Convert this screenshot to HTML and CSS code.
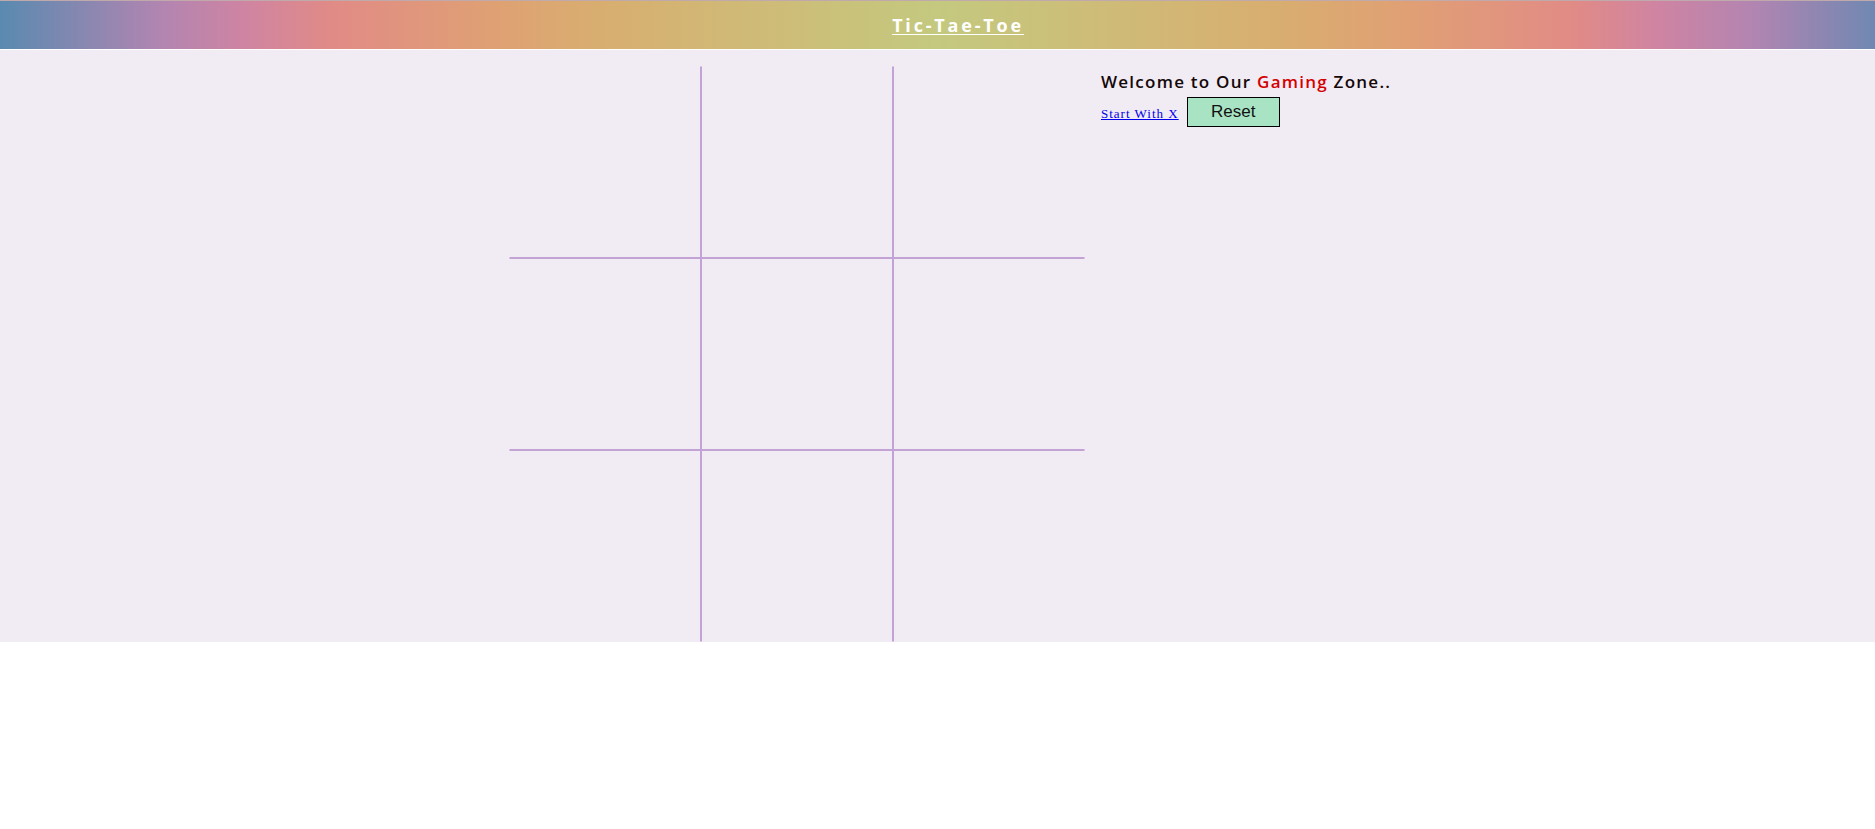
FILE: index.html
```html
<!DOCTYPE html>
<html lang="en">
<head>
<meta charset="utf-8">
<title>Tic-Tae-Toe</title>
<link rel="stylesheet" href="styles.css">
</head>
<body>
<header class="topbar">
  <a class="title" href="#">Tic-Tae-Toe</a>
</header>
<main class="main">
  <div class="board">
    <div class="cell"></div>
    <div class="cell"></div>
    <div class="cell"></div>
    <div class="cell"></div>
    <div class="cell"></div>
    <div class="cell"></div>
    <div class="cell"></div>
    <div class="cell"></div>
    <div class="cell"></div>
  </div>
  <section class="panel">
    <h2 class="welcome">Welcome to Our <span class="accent">Gaming</span> Zone..</h2>
    <div class="controls">
      <a class="start" href="#">Start With X</a>
      <button class="reset" type="button">Reset</button>
    </div>
  </section>
</main>
</body>
</html>
```

FILE: styles.css
```css
html, body {
  margin: 0;
  padding: 0;
  background: #ffffff;
}

.topbar {
  height: 48px;
  border-top: 1px solid #bfa9ab;
  margin-bottom: 1px;
  padding-left: 41px;
  display: flex;
  align-items: center;
  justify-content: center;
  background: linear-gradient(to right,
    #5a8ab0 0%,
    #b285b1 8.6%,
    #cf84a2 13%,
    #e18b86 17.8%,
    #dfa173 26.5%,
    #d8ae70 32%,
    #c4c97f 50%,
    #d8ae70 68%,
    #e0a074 75%,
    #e18b86 83.9%,
    #cf84a2 88.4%,
    #b285b1 93.5%,
    #7088b2 100%);
}

.title {
  font-family: "Open Sans", "Noto Sans", sans-serif;
  font-weight: 700;
  font-size: 18px;
  letter-spacing: 2.8px;
  color: #ffffff;
  text-decoration: underline;
  text-underline-offset: 2px;
}

.main {
  background: #f1ebf4;
  display: flex;
  align-items: flex-start;
  gap: 16px;
  padding: 16px 0 0 509px;
}

.board {
  display: grid;
  grid-template-columns: repeat(3, 192px);
  grid-template-rows: repeat(3, 192px);
}

.cell {
  box-sizing: border-box;
  border: 1px solid #c3a2d6;
}

.cell:nth-child(-n+3) { border-top-color: transparent; }
.cell:nth-child(n+7) { border-bottom-color: transparent; }
.cell:nth-child(3n+1) { border-left-color: transparent; }
.cell:nth-child(3n) { border-right-color: transparent; }

.panel {
  display: flex;
  flex-direction: column;
}

.welcome {
  margin: 4px 0 4px;
  font-family: "Open Sans", "Noto Sans", sans-serif;
  font-weight: 600;
  font-size: 17px;
  letter-spacing: 1.25px;
  color: #140808;
}

.accent {
  color: #d40000;
}

.controls {
  display: flex;
  align-items: center;
  gap: 8px;
}

.start {
  font-family: "Liberation Serif", "Times New Roman", serif;
  font-size: 13px;
  letter-spacing: 1px;
  color: #0000ee;
  text-decoration: underline;
  margin-top: 3px;
}

.reset {
  box-sizing: border-box;
  width: 93px;
  height: 30px;
  padding: 0;
  background: #a8e4c4;
  border: 1px solid #000000;
  border-radius: 0;
  font-family: "Liberation Sans", Arial, sans-serif;
  font-size: 17px;
  color: #111111;
}
```
